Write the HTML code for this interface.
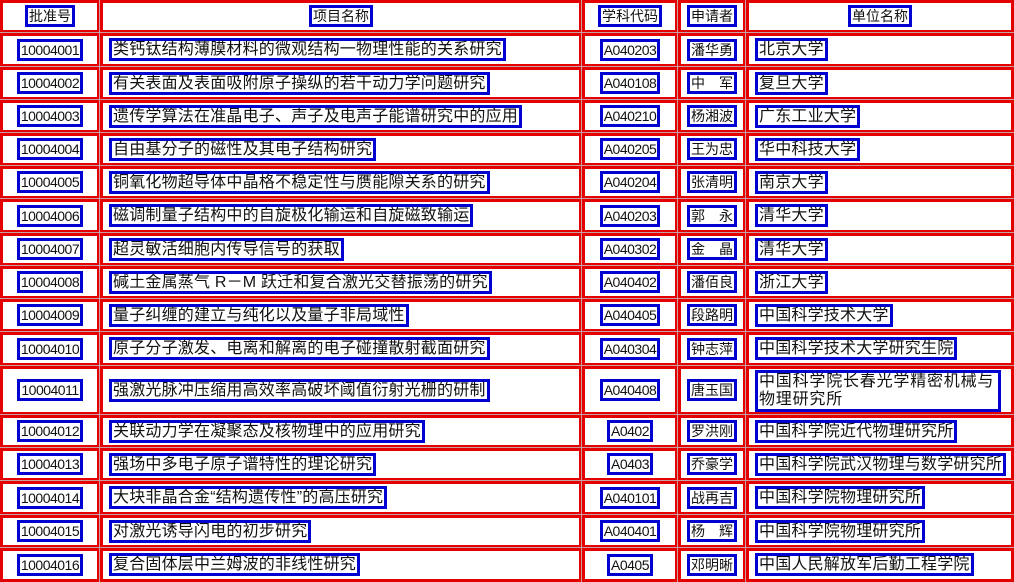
<!DOCTYPE html>
<html><head><meta charset="utf-8"><style>
html,body{margin:0;padding:0;background:#fff;width:1014px;height:582px;overflow:hidden}
table{border-collapse:separate;border-spacing:0;table-layout:fixed;width:1014px;font-family:"Liberation Sans","Noto Sans CJK SC",sans-serif;font-size:16px}
td{border:3px solid #e50000;box-shadow:0 0 0 1px #c8a0a0;padding:0 4px;text-align:center;vertical-align:middle;background:#fff;line-height:16px;overflow:hidden;box-sizing:border-box;white-space:nowrap}
td.l{text-align:left;padding-left:6px}
span{border:3px solid #0000d0;padding:0 1px;color:#111;background:#fff;letter-spacing:0.2px}
span.n{font-size:14px;letter-spacing:-0.5px}
span.s{font-size:14px;letter-spacing:0}
.m span{display:inline-block;line-height:18px;white-space:normal;letter-spacing:0.8px;width:238px}
</style></head><body>
<table>
<colgroup><col style="width:100px"><col style="width:482px"><col style="width:96px"><col style="width:68px"><col style="width:268px"></colgroup>
<tr style="height:33px"><td><span class="s">批准号</span></td><td><span class="s">项目名称</span></td><td><span class="s">学科代码</span></td><td><span class="s">申请者</span></td><td><span class="s">单位名称</span></td></tr>
<tr style="height:34px"><td><span class="n">10004001</span></td><td class="l"><span>类钙钛结构薄膜材料的微观结构一物理性能的关系研究</span></td><td><span class="n">A040203</span></td><td><span class="s">潘华勇</span></td><td class="l"><span>北京大学</span></td></tr>
<tr style="height:33px"><td><span class="n">10004002</span></td><td class="l"><span>有关表面及表面吸附原子操纵的若干动力学问题研究</span></td><td><span class="n">A040108</span></td><td><span class="s">中　军</span></td><td class="l"><span>复旦大学</span></td></tr>
<tr style="height:33px"><td><span class="n">10004003</span></td><td class="l"><span>遗传学算法在准晶电子、声子及电声子能谱研究中的应用</span></td><td><span class="n">A040210</span></td><td><span class="s">杨湘波</span></td><td class="l"><span>广东工业大学</span></td></tr>
<tr style="height:33px"><td><span class="n">10004004</span></td><td class="l"><span>自由基分子的磁性及其电子结构研究</span></td><td><span class="n">A040205</span></td><td><span class="s">王为忠</span></td><td class="l"><span>华中科技大学</span></td></tr>
<tr style="height:33px"><td><span class="n">10004005</span></td><td class="l"><span>铜氧化物超导体中晶格不稳定性与赝能隙关系的研究</span></td><td><span class="n">A040204</span></td><td><span class="s">张清明</span></td><td class="l"><span>南京大学</span></td></tr>
<tr style="height:34px"><td><span class="n">10004006</span></td><td class="l"><span>磁调制量子结构中的自旋极化输运和自旋磁致输运</span></td><td><span class="n">A040203</span></td><td><span class="s">郭　永</span></td><td class="l"><span>清华大学</span></td></tr>
<tr style="height:33px"><td><span class="n">10004007</span></td><td class="l"><span>超灵敏活细胞内传导信号的获取</span></td><td><span class="n">A040302</span></td><td><span class="s">金　晶</span></td><td class="l"><span>清华大学</span></td></tr>
<tr style="height:33px"><td><span class="n">10004008</span></td><td class="l"><span>碱土金属蒸气 R－M 跃迁和复合激光交替振荡的研究</span></td><td><span class="n">A040402</span></td><td><span class="s">潘佰良</span></td><td class="l"><span>浙江大学</span></td></tr>
<tr style="height:33px"><td><span class="n">10004009</span></td><td class="l"><span>量子纠缠的建立与纯化以及量子非局域性</span></td><td><span class="n">A040405</span></td><td><span class="s">段路明</span></td><td class="l"><span>中国科学技术大学</span></td></tr>
<tr style="height:34px"><td><span class="n">10004010</span></td><td class="l"><span>原子分子激发、电离和解离的电子碰撞散射截面研究</span></td><td><span class="n">A040304</span></td><td><span class="s">钟志萍</span></td><td class="l"><span>中国科学技术大学研究生院</span></td></tr>
<tr style="height:49px"><td><span class="n">10004011</span></td><td class="l"><span>强激光脉冲压缩用高效率高破坏阈值衍射光栅的研制</span></td><td><span class="n">A040408</span></td><td><span class="s">唐玉国</span></td><td class="l m"><span>中国科学院长春光学精密机械与物理研究所</span></td></tr>
<tr style="height:33px"><td><span class="n">10004012</span></td><td class="l"><span>关联动力学在凝聚态及核物理中的应用研究</span></td><td><span class="n">A0402</span></td><td><span class="s">罗洪刚</span></td><td class="l"><span>中国科学院近代物理研究所</span></td></tr>
<tr style="height:33px"><td><span class="n">10004013</span></td><td class="l"><span>强场中多电子原子谱特性的理论研究</span></td><td><span class="n">A0403</span></td><td><span class="s">乔豪学</span></td><td class="l"><span>中国科学院武汉物理与数学研究所</span></td></tr>
<tr style="height:34px"><td><span class="n">10004014</span></td><td class="l"><span>大块非晶合金“结构遗传性”的高压研究</span></td><td><span class="n">A040101</span></td><td><span class="s">战再吉</span></td><td class="l"><span>中国科学院物理研究所</span></td></tr>
<tr style="height:33px"><td><span class="n">10004015</span></td><td class="l"><span>对激光诱导闪电的初步研究</span></td><td><span class="n">A040401</span></td><td><span class="s">杨　辉</span></td><td class="l"><span>中国科学院物理研究所</span></td></tr>
<tr style="height:34px"><td><span class="n">10004016</span></td><td class="l"><span>复合固体层中兰姆波的非线性研究</span></td><td><span class="n">A0405</span></td><td><span class="s">邓明晰</span></td><td class="l"><span>中国人民解放军后勤工程学院</span></td></tr>
</table>
</body></html>
